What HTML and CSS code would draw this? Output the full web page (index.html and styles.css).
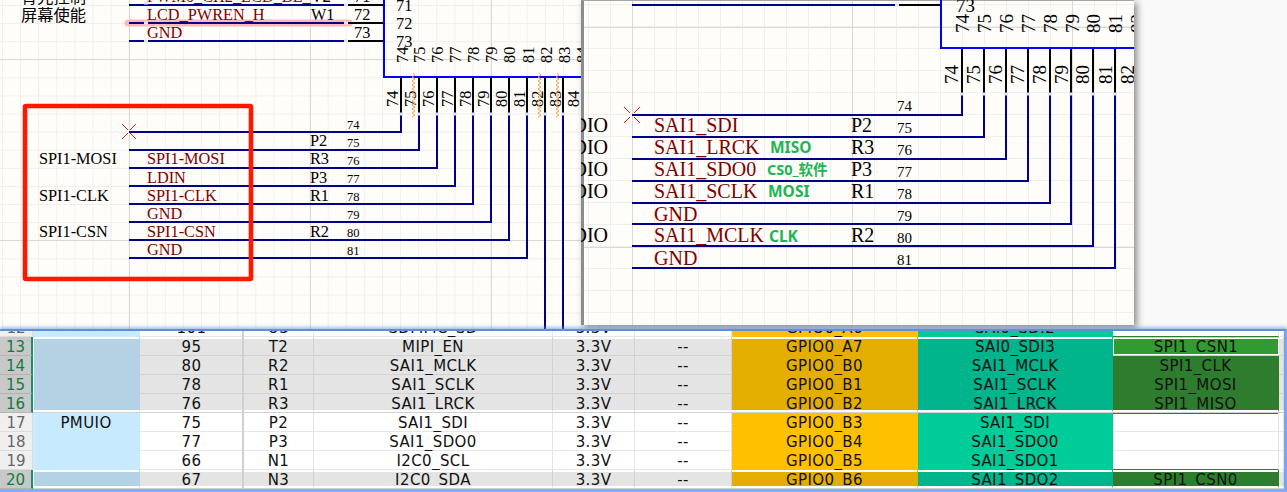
FILE: index.html
```html
<!DOCTYPE html>
<html lang="zh">
<head>
<meta charset="utf-8">
<title>SPI1 schematic and pin table</title>
<link rel="stylesheet" href="styles.css">
</head>
<body>
<div class="top">
  <div class="canvas">
    <svg class="schem" width="600" height="329" viewBox="0 0 600 329">
      <defs>
        <path id="zig" d="M0 0l2 2-3 2 3 2-3 2 3 2-3 2 3 2-3 2 3 2-3 2 3 2-3 2 3 2-3 2 3 2-3 2 3 2-3 2 3 2-3 2 3 2-3 2"/>
      </defs>
      <path class="hl" d="M128 23H349"/>
      <path class="wire" d="M129 5H346M129 23H346M129 41H346M129 132H401V113M129 150H419V113M129 168H437V113M129 186H455V113M129 204H473V113M129 222H491V113M129 240H509V113M129 258H527V113M545 113V329M563 113V329"/>
      <path class="pin" d="M346 5H383M346 23H383M346 41H383M401 77V113M419 77V113M437 77V113M455 77V113M473 77V113M491 77V113M509 77V113M527 77V113M545 77V113M563 77V113"/>
      <path class="hot" d="M144 3h4M144 23h4M144 41h4M344 5h4M344 23h4M344 41h4M399 114h4M417 114h4M435 114h4M453 114h4M471 114h4M489 114h4M507 114h4M525 114h4M543 114h4M561 114h4"/>
      <path class="box" d="M384 0V77H600"/>
      <text class="sch blk" x="21" y="3">背光控制</text>
      <text class="sch blk" x="21" y="21">屏幕使能</text>
      <text class="sch red" x="147" y="2">PWM0_CH2_LCD_BL_V2</text>
      <text class="sch red" x="147" y="20">LCD_PWREN_H</text>
      <text class="sch red" x="147" y="38">GND</text>
      <text class="sch blk" x="311" y="2">V2</text>
      <text class="sch blk" x="311" y="20">W1</text>
      <text class="sch blk" x="354" y="2">71</text>
      <text class="sch blk" x="354" y="20">72</text>
      <text class="sch blk" x="354" y="38">73</text>
      <text class="sch blk" x="396" y="11">71</text>
      <text class="sch blk" x="396" y="29">72</text>
      <text class="sch blk" x="396" y="47">73</text>
      <g class="sch blk">
        <text transform="rotate(-90 408 63)" x="408" y="63">74</text>
        <text transform="rotate(-90 425 63)" x="425" y="63">75</text>
        <text transform="rotate(-90 443 63)" x="443" y="63">76</text>
        <text transform="rotate(-90 461 63)" x="461" y="63">77</text>
        <text transform="rotate(-90 479 63)" x="479" y="63">78</text>
        <text transform="rotate(-90 497 63)" x="497" y="63">79</text>
        <text transform="rotate(-90 515 63)" x="515" y="63">80</text>
        <text transform="rotate(-90 534 63)" x="534" y="63">81</text>
        <text transform="rotate(-90 552 63)" x="552" y="63">82</text>
        <text transform="rotate(-90 570 63)" x="570" y="63">83</text>
        <text transform="rotate(-90 588 63)" x="588" y="63">84</text>
        <text transform="rotate(-90 398 107)" x="398" y="107">74</text>
        <text transform="rotate(-90 416 107)" x="416" y="107">75</text>
        <text transform="rotate(-90 434 107)" x="434" y="107">76</text>
        <text transform="rotate(-90 453 107)" x="453" y="107">77</text>
        <text transform="rotate(-90 471 107)" x="471" y="107">78</text>
        <text transform="rotate(-90 489 107)" x="489" y="107">79</text>
        <text transform="rotate(-90 507 107)" x="507" y="107">80</text>
        <text transform="rotate(-90 525 107)" x="525" y="107">81</text>
        <text transform="rotate(-90 543 107)" x="543" y="107">82</text>
        <text transform="rotate(-90 561 107)" x="561" y="107">83</text>
        <text transform="rotate(-90 579 107)" x="579" y="107">84</text>
      </g>
      <use class="zig" href="#zig" x="413" y="73"/>
      <use class="zig" href="#zig" x="539" y="73"/>
      <use class="zig" href="#zig" x="557" y="73"/>
      <text class="sch blk" x="39" y="164">SPI1-MOSI</text>
      <text class="sch blk" x="39" y="201">SPI1-CLK</text>
      <text class="sch blk" x="39" y="237">SPI1-CSN</text>
      <text class="sch red" x="147" y="164">SPI1-MOSI</text>
      <text class="sch red" x="147" y="183">LDIN</text>
      <text class="sch red" x="147" y="201">SPI1-CLK</text>
      <text class="sch red" x="147" y="219">GND</text>
      <text class="sch red" x="147" y="237">SPI1-CSN</text>
      <text class="sch red" x="147" y="255">GND</text>
      <text class="sch blk" x="310" y="146">P2</text>
      <text class="sch blk" x="310" y="164">R3</text>
      <text class="sch blk" x="310" y="183">P3</text>
      <text class="sch blk" x="310" y="201">R1</text>
      <text class="sch blk" x="310" y="237">R2</text>
      <g class="num blk">
        <text x="347" y="129">74</text>
        <text x="347" y="147">75</text>
        <text x="347" y="165">76</text>
        <text x="347" y="183">77</text>
        <text x="347" y="201">78</text>
        <text x="347" y="219">79</text>
        <text x="347" y="237">80</text>
        <text x="347" y="255">81</text>
      </g>
      <path class="cross" d="M122 124l6 6M130 133l6 6M136 124l-6 6M128 133l-6 6"/>
      <rect class="mark" x="25" y="106" width="226" height="173" rx="1"/>
    </svg>
  </div>
  <div class="popup">
    <svg class="schem" width="553" height="325" viewBox="581 0 553 325">
      <path class="wire" d="M632 5H897M632 115H962V93M632 137H984V93M632 159H1006V93M632 181H1028V93M632 203H1050V93M632 224H1071V93M632 246H1093V93M632 268H1115V93"/>
      <path class="pin" d="M897 5H940M962 49V93M984 49V93M1006 49V93M1028 49V93M1050 49V93M1071 49V93M1093 49V93M1115 49V93"/>
      <path class="hot" d="M895 5h4M960 94h4M982 94h4M1004 94h4M1026 94h4M1048 94h4M1069 94h4M1091 94h4M1113 94h4"/>
      <path class="box" d="M941 0V48H1134"/>
      <g class="big blk">
        <text x="956" y="12">73</text>
        <text transform="rotate(-90 969 33)" x="969" y="33">74</text>
        <text transform="rotate(-90 991 33)" x="991" y="33">75</text>
        <text transform="rotate(-90 1013 33)" x="1013" y="33">76</text>
        <text transform="rotate(-90 1035 33)" x="1035" y="33">77</text>
        <text transform="rotate(-90 1057 33)" x="1057" y="33">78</text>
        <text transform="rotate(-90 1079 33)" x="1079" y="33">79</text>
        <text transform="rotate(-90 1100 33)" x="1100" y="33">80</text>
        <text transform="rotate(-90 1122 33)" x="1122" y="33">81</text>
        <text transform="rotate(-90 1144 33)" x="1144" y="33">82</text>
        <text transform="rotate(-90 958 84)" x="958" y="84">74</text>
        <text transform="rotate(-90 980 84)" x="980" y="84">75</text>
        <text transform="rotate(-90 1002 84)" x="1002" y="84">76</text>
        <text transform="rotate(-90 1024 84)" x="1024" y="84">77</text>
        <text transform="rotate(-90 1046 84)" x="1046" y="84">78</text>
        <text transform="rotate(-90 1068 84)" x="1068" y="84">79</text>
        <text transform="rotate(-90 1089 84)" x="1089" y="84">80</text>
        <text transform="rotate(-90 1112 84)" x="1112" y="84">81</text>
        <text transform="rotate(-90 1134 84)" x="1134" y="84">82</text>
      </g>
      <g class="lab blk end">
        <text x="608" y="132">DIO</text>
        <text x="608" y="154">DIO</text>
        <text x="608" y="176">DIO</text>
        <text x="608" y="198">DIO</text>
        <text x="608" y="242">DIO</text>
      </g>
      <g class="lab red">
        <text x="654" y="132">SAI1_SDI</text>
        <text x="654" y="154">SAI1_LRCK</text>
        <text x="654" y="176">SAI1_SDO0</text>
        <text x="654" y="198">SAI1_SCLK</text>
        <text x="654" y="221">GND</text>
        <text x="654" y="242">SAI1_MCLK</text>
        <text x="654" y="265">GND</text>
      </g>
      <g class="lab blk">
        <text x="851" y="132">P2</text>
        <text x="851" y="154">R3</text>
        <text x="851" y="176">P3</text>
        <text x="851" y="198">R1</text>
        <text x="851" y="242">R2</text>
      </g>
      <g class="pnum blk">
        <text x="897" y="111">74</text>
        <text x="897" y="133">75</text>
        <text x="897" y="155">76</text>
        <text x="897" y="177">77</text>
        <text x="897" y="199">78</text>
        <text x="897" y="221">79</text>
        <text x="897" y="243">80</text>
        <text x="897" y="265">81</text>
      </g>
      <g class="note">
        <text x="770" y="153">MISO</text>
        <text x="767" y="175" class="note-sm">CS0_软件</text>
        <text x="768" y="197">MOSI</text>
        <text x="769" y="242">CLK</text>
      </g>
      <path class="cross" d="M624 107l6 6M634 117l6 6M640 107l-6 6M630 117l-6 6"/>
    </svg>
  </div>
</div>
<div class="sheet">
  <div class="view">
    <div class="rows">
      <div class="row">
        <div class="cell hd">12</div><div class="cell a"></div><div class="cell">101</div><div class="cell thick">U3</div><div class="cell">SDMMC_SD</div><div class="cell">3.3V</div><div class="cell">--</div><div class="cell f">GPIO0_A6</div><div class="cell g">SAI0_SDI2</div><div class="cell i edge"></div><div class="cell"></div>
      </div>
      <div class="row sel first">
        <div class="cell hd">13</div><div class="cell a"></div><div class="cell">95</div><div class="cell thick">T2</div><div class="cell">MIPI_EN</div><div class="cell">3.3V</div><div class="cell">--</div><div class="cell f">GPIO0_A7</div><div class="cell g">SAI0_SDI3</div><div class="cell active">SPI1_CSN1</div><div class="cell"></div>
      </div>
      <div class="row sel">
        <div class="cell hd">14</div><div class="cell a"></div><div class="cell">80</div><div class="cell thick">R2</div><div class="cell">SAI1_MCLK</div><div class="cell">3.3V</div><div class="cell">--</div><div class="cell f">GPIO0_B0</div><div class="cell g">SAI1_MCLK</div><div class="cell i">SPI1_CLK</div><div class="cell"></div>
      </div>
      <div class="row sel">
        <div class="cell hd">15</div><div class="cell a"></div><div class="cell">78</div><div class="cell thick">R1</div><div class="cell">SAI1_SCLK</div><div class="cell">3.3V</div><div class="cell">--</div><div class="cell f">GPIO0_B1</div><div class="cell g">SAI1_SCLK</div><div class="cell i">SPI1_MOSI</div><div class="cell"></div>
      </div>
      <div class="row sel last">
        <div class="cell hd">16</div><div class="cell a"></div><div class="cell">76</div><div class="cell thick">R3</div><div class="cell">SAI1_LRCK</div><div class="cell">3.3V</div><div class="cell">--</div><div class="cell f">GPIO0_B2</div><div class="cell g">SAI1_LRCK</div><div class="cell i">SPI1_MISO</div><div class="cell"></div>
      </div>
      <div class="row">
        <div class="cell hd">17</div><div class="cell a">PMUIO</div><div class="cell">75</div><div class="cell thick">P2</div><div class="cell">SAI1_SDI</div><div class="cell">3.3V</div><div class="cell">--</div><div class="cell f">GPIO0_B3</div><div class="cell g">SAI1_SDI</div><div class="cell i under"></div><div class="cell"></div>
      </div>
      <div class="row">
        <div class="cell hd">18</div><div class="cell a"></div><div class="cell">77</div><div class="cell thick">P3</div><div class="cell">SAI1_SDO0</div><div class="cell">3.3V</div><div class="cell">--</div><div class="cell f">GPIO0_B4</div><div class="cell g">SAI1_SDO0</div><div class="cell i"></div><div class="cell"></div>
      </div>
      <div class="row">
        <div class="cell hd">19</div><div class="cell a"></div><div class="cell">66</div><div class="cell thick">N1</div><div class="cell">I2C0_SCL</div><div class="cell">3.3V</div><div class="cell">--</div><div class="cell f">GPIO0_B5</div><div class="cell g">SAI1_SDO1</div><div class="cell i edge"></div><div class="cell"></div>
      </div>
      <div class="row sel first last">
        <div class="cell hd">20</div><div class="cell a"></div><div class="cell">67</div><div class="cell thick">N3</div><div class="cell">I2C0_SDA</div><div class="cell">3.3V</div><div class="cell">--</div><div class="cell f">GPIO0_B6</div><div class="cell g">SAI1_SDO2</div><div class="cell i">SPI1_CSN0</div><div class="cell"></div>
      </div>
    </div>
  </div>
</div>
</body>
</html>
```

FILE: styles.css
```css
* { box-sizing: border-box; }
html, body { margin: 0; padding: 0; }
body { width: 1287px; height: 492px; overflow: hidden; position: relative; background: #f9f9f9; }

/* schematic area */
.top { height: 329px; display: flex; background: #f9f9f9; }
.canvas {
  width: 600px; height: 329px; background-color: #fffdf9;
  background-image:
    linear-gradient(#d9d9d6 1px, transparent 1px), linear-gradient(90deg, #d9d9d6 1px, transparent 1px),
    linear-gradient(#efefeb 1px, transparent 1px), linear-gradient(90deg, #efefeb 1px, transparent 1px);
  background-size: 181px 181px, 181px 181px, 18.1px 18.1px, 18.1px 18.1px;
  background-position: 0 59px, 129px 0, 0 5px, 2px 0;
}
.schem { display: block; }
.popup {
  position: absolute; left: 581px; top: 0; width: 553px; height: 325px;
  background-color: #fffdf9;
  background-image:
    linear-gradient(#d9d9d6 1px, transparent 1px), linear-gradient(90deg, #d9d9d6 1px, transparent 1px),
    linear-gradient(#efefeb 1px, transparent 1px), linear-gradient(90deg, #efefeb 1px, transparent 1px);
  background-size: 220px 220px, 220px 220px, 22px 22px, 22px 22px;
  background-position: 0 26px, 48px 0, 0 3px, 4px 0;
  border-left: 3px solid #8c8c8c; border-top: 1px solid #a5a5a5;
  box-shadow: 3px 3px 7px rgba(0, 0, 0, .45);
}
.popup .schem { margin-left: -3px; margin-top: -1px; }

.wire, .pin, .box, .hl, .hot, .cross { fill: none; }
.wire { stroke: #00008b; stroke-width: 2; }
.pin { stroke: #000; stroke-width: 2; }
.box { stroke: #0000ff; stroke-width: 2; }
.hl { stroke: #fbb9b9; stroke-width: 7; stroke-linecap: round; }
.hot { stroke: #e1e5fb; stroke-width: 3; }
.cross { stroke: #f01818; stroke-width: 1; }
.mark { fill: none; stroke: #ff1800; stroke-width: 4.6; }
.zig { fill: none; stroke: #ff9a50; stroke-width: 1; }

.sch, .num, .big, .lab, .pnum { font-family: "Liberation Serif", "Noto Sans CJK SC", serif; }
.sch { font-size: 16.3px; }
.num { font-size: 12.5px; }
.big { font-size: 19px; }
.lab { font-size: 20px; }
.pnum { font-size: 15px; }
.blk { fill: #000; }
.red { fill: #800000; }
.end { text-anchor: end; }
.note { font-family: "Noto Sans", "Noto Sans CJK SC", sans-serif; font-size: 15.5px; font-weight: 700; fill: #20b455; }
.note-sm { font-size: 14.5px; }

/* spreadsheet */
.sheet {
  height: 163px; width: 1287px; position: relative; background: #fff;
  border-top: 2px solid #5f8fdc; border-right: 3px solid #79a6ee; border-bottom: 3px solid #86aef0;
  box-shadow: 0 -2px 3px rgba(95, 143, 220, .55);
}
.view { height: 158px; overflow: hidden; }
.rows { margin-top: -13px; font-family: "DejaVu Sans", sans-serif; font-size: 15px; letter-spacing: .4px; color: #111; }
.row {
  display: grid; height: 19px; background: #e6e6e6;
  grid-template-columns: 33px 107px 104px 70px 239px 82px 97px 186px 195px 166px 5px;
}
.cell {
  height: 19px; line-height: 20px; text-align: center; white-space: nowrap;
  background: #fff; border-right: 1px solid #e6e6e6; border-bottom: 1px solid #e6e6e6;
}
.hd { background: #efefef; color: #666; border-color: #dcdcdc; letter-spacing: 0; }
.a { background: #c8eaff; border-color: #c8eaff; }
.thick { box-shadow: -2px 0 0 #cfcfcf; }
.f { background: #ffc000; border-color: #ffc000; }
.g { background: #00cc99; border-color: #00cc99; }
.i { border-right-color: #e6e6e6; }
.edge { border-bottom-color: #2e7d2e; }
.under { box-shadow: inset 0 1px 0 #2e7d2e; }

.sel { background: #d2d2d2; }
.sel .cell { background: #e4e4e4; border-color: #d2d2d2; }
.sel .hd { background: #c8c8c8; color: #107c41; border-right: 2px solid #14936a; border-bottom-color: #b4b4b4; }
.sel .a { background: #b4d2e4; border-color: #b4d2e4; box-shadow: inset 1px 0 0 #fff; }
.sel .f { background: #e4ae00; border-color: #e4ae00; }
.sel .g { background: #00b48c; border-color: #00b48c; }
.sel .i { background: #2e7d2e; border-color: #2e7d2e; }
.sel .active {
  height: 17px; line-height: 16px; margin: 1px 0 1px; background: #339933;
  border: 1px solid #fff; overflow: hidden;
}
.sel .thick { box-shadow: -2px 0 0 #cfcfcf; }
.sel.first .cell { box-shadow: inset 0 2px 0 #fff; }
.sel.first .thick { box-shadow: inset 0 2px 0 #fff, -2px 0 0 #cfcfcf; }
.sel.first .a { box-shadow: inset 0 2px 0 #fff, inset 1px 0 0 #fff; }
.sel.first .hd { box-shadow: none; }
.sel.first .active { box-shadow: none; }
.sel.last .cell { height: 18px; border-bottom: 2px solid #fff; overflow: hidden; }
.sel.last .hd { height: 19px; border-bottom-color: #b4b4b4; border-bottom-width: 1px; }
```
